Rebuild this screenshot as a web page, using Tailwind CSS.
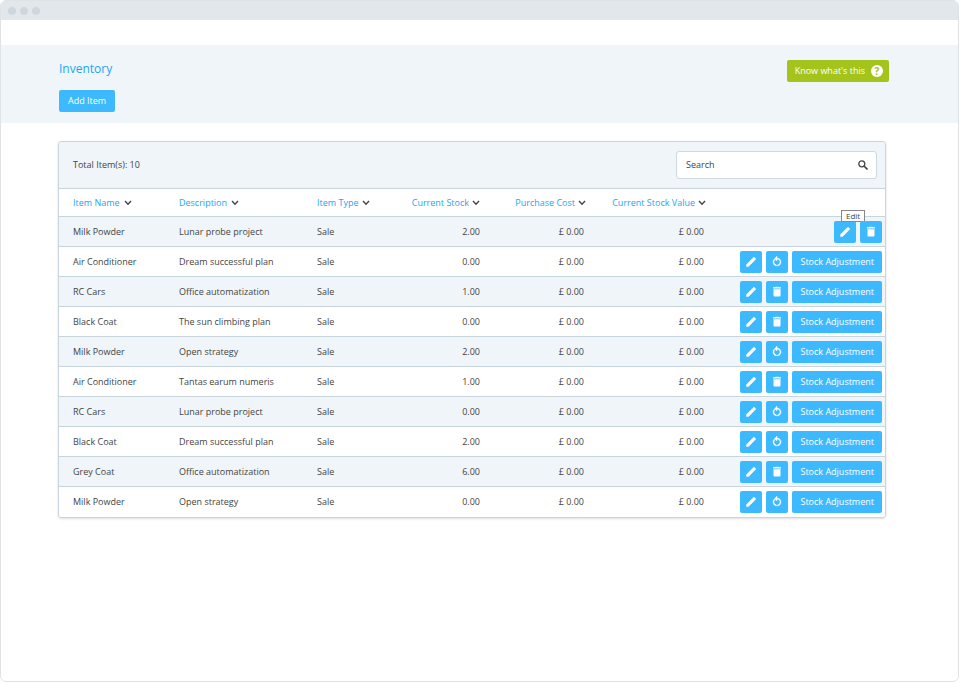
<!DOCTYPE html>
<html lang="en">
<head>
  <meta charset="UTF-8" />
  <meta name="viewport" content="width=device-width, initial-scale=1.0"/>
  <title>Inventory</title>
  <script src="https://cdn.jsdelivr.net/npm/@tailwindcss/browser@4"></script>
</head>
<body class="bg-white font-['Open_Sans',sans-serif] text-[9px] leading-[14px] text-[#444]">

  <svg class="hidden">
    <symbol id="pencil" viewBox="0 0 24 24"><path d="M3 17V21h4L18 10 14 6zM21 7a1.400 1.400 0 0 0 0-2L19 3a1.400 1.400 0 0 0-2 0L14.500 5.500 18.500 9.500z" stroke="currentColor"/></symbol>
    <symbol id="trash" viewBox="0 0 24 24"><path d="M5 18.500C5 20 6 21 7.500 21h9c1.500 0 2.500-1 2.500-2.500V6.500H5zM20 2.500H16l-1-1H9l-1 1H4V5h16z"/></symbol>
    <symbol id="restore" viewBox="0 0 24 24"><path stroke="currentColor" stroke-width=".8" d="M12 4V0L7 5.500l5 4.500V6c3.310 0 6 2.690 6 6 0 2.970-2.170 5.430-5 5.910v2.020c3.950-.490 7-3.850 7-7.930 0-4.420-3.580-8-8-8zM6 12c0-1.650.670-3.150 1.760-4.240L6.340 6.340C4.900 7.790 4 9.790 4 12c0 4.080 3.050 7.440 7 7.930v-2.020c-2.830-.480-5-2.940-5-5.910z"/></symbol>
    <symbol id="chevron" viewBox="0 0 8 6"><path d="M1 1l3 3.200L7 1" fill="none" stroke="currentColor" stroke-width="1.400"/></symbol>
  </svg>

  <div class="min-h-[682px] mr-px border border-[#dfe3e6] rounded-md overflow-hidden">
    <div class="flex items-center gap-1 h-[19px] px-[7px] bg-[#e1e7eb]">
      <span class="size-2 rounded-full bg-[#cfd7dc]"></span>
      <span class="size-2 rounded-full bg-[#cfd7dc]"></span>
      <span class="size-2 rounded-full bg-[#cfd7dc]"></span>
    </div>

    <header class="mt-[25px] flex items-start justify-between bg-[#eff5f9] pl-[58px] pr-[69px] pt-[15px] pb-[11px]">
      <div>
        <h1 class="text-[12px] leading-[18px] text-[#1ba6f5]">Inventory</h1>
        <button class="mt-3 h-[22px] px-[9px] rounded-xs bg-[#3dbaff] text-white">Add Item</button>
      </div>
      <button class="flex items-center gap-1.5 h-[22px] pl-2 pr-1.5 rounded-xs bg-[#a4c41c] text-white">
        Know what's this
        <span class="size-3 rounded-full bg-white text-[10px] leading-3 font-bold text-[#a4c41c]">?</span>
      </button>
    </header>

    <main class="mt-[18px] ml-[57px] mr-[72px] border border-[#c9d5dc] rounded-[3px] shadow-sm">
      <div class="flex items-center justify-between h-[46px] pl-3.5 pr-2 bg-[#eff5f9] rounded-t-[3px]">
        <p>Total Item(s): 10</p>
        <div class="flex items-center w-[201px] h-7 pl-[9px] pr-2 bg-white border border-[#cfd8dd] rounded-[3px]">
          <input type="text" aria-label="Search" placeholder="Search" class="grow min-w-0 outline-none placeholder:text-[#444]" />
          <svg class="size-2.5 text-[#444]" viewBox="0 0 10 10" fill="none" stroke="currentColor"><circle cx="3.800" cy="3.800" r="3" stroke-width="1.300"/><path d="M6 6l3.500 3.500" stroke-width="1.700"/></svg>
        </div>
      </div>

      <table class="w-full table-fixed">
        <colgroup>
          <col class="w-[106px]" />
          <col class="w-[138px]" />
          <col class="w-[88px]" />
          <col class="w-[89px]" />
          <col class="w-[106px]" />
          <col class="w-[120px]" />
          <col />
        </colgroup>
        <thead>
          <tr id="head" class="h-7 border-t border-[#c9d5dc] whitespace-nowrap"></tr>
        </thead>
        <tbody id="rows"></tbody>
      </table>
    </main>
  </div>

  <script>
    const columns = ['Item Name', 'Description', 'Item Type', 'Current Stock', 'Purchase Cost', 'Current Stock Value'];

    // name, description, stock, second action icon
    const items = [
      ['Milk Powder', 'Lunar probe project', '2.00', 'trash'],
      ['Air Conditioner', 'Dream successful plan', '0.00', 'restore'],
      ['RC Cars', 'Office automatization', '1.00', 'trash'],
      ['Black Coat', 'The sun climbing plan', '0.00', 'trash'],
      ['Milk Powder', 'Open strategy', '2.00', 'restore'],
      ['Air Conditioner', 'Tantas earum numeris', '1.00', 'trash'],
      ['RC Cars', 'Lunar probe project', '0.00', 'restore'],
      ['Black Coat', 'Dream successful plan', '2.00', 'restore'],
      ['Grey Coat', 'Office automatization', '6.00', 'trash'],
      ['Milk Powder', 'Open strategy', '0.00', 'restore']
    ];

    function iconButton(icon, label, tip) {
      return `<button aria-label="${label}" class="relative flex items-center justify-center size-[22px] rounded-xs bg-[#3dbaff] text-white">
        <svg class="size-3 fill-current"><use href="#${icon}"/></svg>
        ${tip ? `<span class="absolute -top-[11px] left-[7px] px-1 border border-[#888] bg-white text-[8px] leading-[10px] text-[#444]">${tip}</span>` : ''}
      </button>`;
    }

    document.getElementById('head').innerHTML = columns.map((name, i) => `
      <th class="p-0 font-normal ${i < 3 ? 'pl-3.5' : ''}">
        <button class="flex items-center w-full text-[#1ba6f5] ${i < 3 ? 'gap-1' : 'gap-[3px] justify-end'}">
          ${name} <svg class="w-2 h-1.5 text-[#444]"><use href="#chevron"/></svg>
        </button>
      </th>`).join('') + '<td></td>';

    document.getElementById('rows').innerHTML = items.map(([name, description, stock, icon], i) => `
      <tr class="h-[30px] border-t border-[#c9d5dc] odd:bg-[#eff5f9]">
        <td class="pl-3.5">${name}</td>
        <td class="pl-3.5">${description}</td>
        <td class="pl-3.5">Sale</td>
        <td class="text-right">${stock}</td>
        <td class="pr-0.5 text-right">£ 0.00</td>
        <td class="pr-0.5 text-right">£ 0.00</td>
        <td class="pr-[3px]">
          <div class="flex justify-end gap-1">
            ${iconButton('pencil', 'Edit', i === 0 ? 'Edit' : '')}
            ${iconButton(icon, icon === 'trash' ? 'Delete' : 'Restore', '')}
            ${i > 0 ? '<button class="h-[22px] px-2 rounded-xs bg-[#3dbaff] text-white">Stock Adjustment</button>' : ''}
          </div>
        </td>
      </tr>`).join('');
  </script>
</body>
</html>
